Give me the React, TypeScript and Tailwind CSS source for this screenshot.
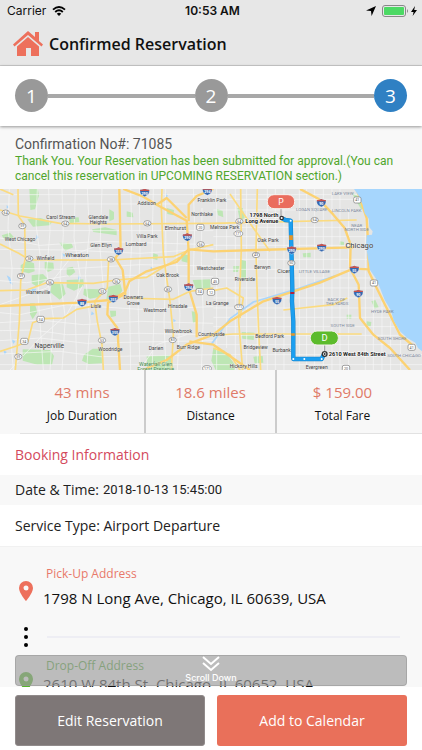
import type { ReactNode } from 'react';

type Label = [text: string, x: number, y: number, size?: number];

const towns: Label[] = [
  ['Addison', 440, 50], ['Carol Stream', 182, 94], ['Glendale', 295, 92], ['Heights', 295, 109],
  ['Elmhurst', 526, 126, 16], ['Villa Park', 441, 150], ['Lombard', 408, 173, 16], ['West Chicago', 60, 160],
  ['Glen Ellyn', 303, 178], ['Wheaton', 231, 206, 18], ['Winfield', 136, 215], ['Oak Brook', 503, 268],
  ['Warrenville', 114, 319], ['Downers', 400, 333, 15], ['Grove', 400, 350, 15], ['Lisle', 288, 360, 15],
  ['Westmont', 465, 373, 15], ['Hinsdale', 533, 360], ['Willowbrook', 535, 435], ['Countryside', 634, 443],
  ['Woodridge', 331, 488], ['Darien', 468, 486], ['Burr Ridge', 565, 484], ['Naperville', 148, 481, 20],
  ['Franklin Park', 636, 42], ['Northlake', 606, 84], ['Melrose Park', 674, 124], ['Westchester', 632, 245],
  ['La Grange', 652, 352], ['Oak Park', 804, 161, 16], ['Berwyn', 787, 242, 15], ['Cicero', 856, 256, 17],
  ['Riverside', 735, 280], ['Bedford Park', 809, 449], ['Bridgeview', 767, 482], ['Burbank', 845, 491],
  ['Hickory Hills', 731, 540], ['Evergreen', 950, 542], ['Chicago', 1078, 180, 23],
];

const districts: Label[] = [
  ['LAKE VIEW', 1028, 20], ['LOGAN SQUARE', 935, 70], ['LINCOLN PARK', 1040, 73], ['NEAR', 1070, 118],
  ['NORTH SIDE', 1070, 130], ['LITTLE VILLAGE', 943, 254], ['BACK OF', 1009, 340], ['THE YARDS', 1011, 352],
  ['SOUTH SIDE', 1028, 417], ['HYDE PARK', 1147, 376], ['SOUTH SHORE', 1176, 457], ['SOUTH CHICAGO', 1212, 506],
];

const routeSigns: Label[] = [
  ['64', 17, 74], ['59', 67, 114], ['64', 196, 107], ['64', 442, 106], ['38', 88, 212], ['38', 333, 214],
  ['59', 63, 264], ['56', 150, 283], ['56', 349, 280], ['53', 307, 310], ['83', 504, 304], ['56', 602, 169],
  ['53', 306, 457], ['83', 518, 456], ['59', 55, 506], ['171', 715, 137], ['64', 718, 100], ['43', 768, 201],
  ['171', 717, 357], ['64', 944, 96], ['171', 621, 541],
];

const usSigns: Label[] = [
  ['34', 122, 394], ['34', 73, 460], ['20', 601, 118], ['34', 599, 311], ['45', 645, 280],
  ['41', 1072, 36], ['41', 1122, 285], ['41', 1235, 478], ['12', 633, 313], ['20', 1038, 541],
];

const interstates: Label[] = [
  ['290', 434, 14], ['290', 562, 148], ['355', 356, 190], ['355', 340, 332], ['88', 246, 344], ['355', 345, 432],
  ['294', 566, 298], ['294', 622, 10], ['290', 875, 187], ['290', 965, 179], ['90', 964, 45],
  ['55', 831, 338], ['55', 1063, 245], ['90', 1075, 317],
];

const parks = [
  'M88 0l25 0 4 22-12 42-14 2z', 'M82 94l40-4 35 12-8 10-50 4z', 'M5 142l25-8 12 14-28 8z',
  'M62 232l20-14 20 8 2 24-18 6-24-6z', 'M134 222l26 2 2 20-18 8-10-10z', 'M95 262l34-4 14 14-32 24-16-10z',
  'M155 285l34 4 8 28-18 18-28-22z', 'M200 276l50-2 2 20-30 14-22-10z', 'M252 302l46 2 4 22-32 6-20-12z',
  'M325 296l36-8 6 20-18 24-30 2z', 'M90 346l14 0 8 26-14 22-8-16z', 'M68 484l82 2 12 18-6 26-44 0-44-12z',
  'M252 500l26-18 26 0 2 44-40 2-20-10z', 'M276 124l40-6 34 8 0 16-26-4-44-6z', 'M328 64l14 8 0 22-14 6z',
  'M206 90l30-2 2 14-28 4z', 'M200 240l18-4 8 16-18 14-8-8z', 'M178 164l36 2 6 12-24 10z',
  'M578 276l52-2 2 28-44 2z', 'M575 370l14 2 4 26-14 8z', 'M440 505l70-4 12 45-80 0z',
  'M543 196l22 6-2 22-18-4z', 'M460 196l14 4-2 16-14-4z', 'M330 368l18 0 0 16-16 4z',
  'M640 480l34 8 34 46-6 14-54 0-14-30z', 'M712 60l16 0 6 30-14 8z', 'M722 215l16 4 0 58-14-4z',
  'M700 234l18 0-4 18-14 0z', 'M1055 14l18 10 18 38-8 2z', 'M1020 160l12 2 0 10-14 0z',
  'M908 196l24-2 0 14-22 0z', 'M1114 340l12-4 10 22-12 4z', 'M1100 400l14 2-2 14-12-4z',
  'M650 62l18 6 2 20-16-6z', 'M725 432l38 2-2 22-34-4z', 'M760 506l28-2 2 20-26 2z',
  'M1040 380l14 0 0 12-14 0z', 'M380 70l18 4 2 14-20-2z', 'M500 60l22 6-2 16-18-4z',
];

const ponds = [
  'M20 262l10 6 8 22-8-4z', 'M110 140l6 8-8 6z', 'M186 196l12 4-6 8z', 'M95 302l14 0-4 8-10 0z',
  'M20 50l6 8-6 4z', 'M236 260l6 10-8 6z', 'M34 452l12 8-6 8z', 'M10 486l10 6-6 8z', 'M498 16l6 8-6 4z',
  'M520 392l8 6-8 6z', 'M452 236l10 6-10 6z', 'M275 370l8 8-10 4z',
];

const streets = [
  'M0 20H1080M0 48H560M0 128H640M0 150L120 172 300 160 630 170M0 184L200 186 420 196 640 182M0 240L180 244 420 230 640 234',
  'M0 278L80 284 200 264 420 262 640 266M0 374L60 380 200 350 420 364 640 356M0 404L120 396 250 410 420 400 640 406',
  'M0 428L100 426 200 440 420 436 640 440M0 458L120 450 260 466 420 462 640 458M0 498L180 490 300 506 640 500M0 530H640',
  'M28 3L24 120 36 240 30 420 40 546M112 3L108 110 120 200 114 320 130 546M146 3L150 130 140 250 160 390 150 546',
  'M186 3L190 140 180 270 196 390 186 546M226 3L222 150 240 260 226 370 230 546M262 3L268 130 256 260 270 400 260 546',
  'M306 3L300 180 310 300M392 3L396 150 388 300 392 546M418 3L420 200 414 340 420 546M460 3L456 200 464 340 456 546M496 3L498 220 492 400 498 546',
  'M534 100L530 220 540 380 532 546M580 3L584 120 580 260M606 60L604 220 610 390 604 546',
  'M30 546L120 450 200 380 250 290M0 350L140 300 220 200 300 170M420 546L470 470 560 440',
  'M650 3V546M680 3V480M706 3V546M740 3V546M772 3V546M802 3V546M826 3V546M852 3V546M898 3V546M920 3V546M944 3V546M970 3V546M996 3V546M1020 3V546M1046 60V546M1096 120V546M1120 290V546M1146 340V546M1172 400V546M1202 450V546',
  'M640 34H1070M640 66H1085M640 118H1100M640 146H1100M640 172H1100M640 214H1102M640 244H1105M640 270H1110M640 300H1125M640 330H1145M640 360H1160M640 388H1170M640 416H1185M640 442H1195M640 470H1228M640 500H1266M640 530H1266',
];

const highways = [
  'M0 66L60 84 180 106 320 108 640 106 1070 96', 'M54 3L55 84 74 110 76 210 62 280 58 400 46 546', 'M0 168L56 196 90 216 330 216 520 206 568 186 640 170',
  'M0 308L80 306 140 284 280 286 350 276 440 268 540 208', 'M0 490L50 474 84 460 98 404 130 392 190 390 230 364 300 350',
  'M326 216L322 300 284 340 292 400 306 470 310 546', 'M368 330L520 334 570 310 640 300',
  'M486 3L484 60 490 200 510 340 520 440 514 546', 'M0 3L40 20', 'M772 3L768 190 772 330 776 430 782 546',
  'M722 3L724 180 716 400 728 546', 'M640 442L700 438 1085 438', 'M690 18L760 120 810 190', 'M640 480L690 500 720 546',
  'M640 308L680 300 730 330 720 390', 'M1042 330L1000 350 850 366',
];

const expressways = [
  'M0 354L240 344 330 336 374 314 388 280 440 250 530 222 566 184 640 190 770 186 1060 178',
  'M358 3L362 190 346 210 368 246 376 318 324 344 322 380 352 420 360 546',
  'M370 3L430 26 470 50 560 98 566 190 566 300 590 380 590 448', 'M640 3L590 24 566 50 566 100',
  'M430 546L500 516 560 470 640 440 690 400 790 340 960 284 1060 242 1108 244',
  'M900 3L955 32 1000 80 1034 120 1052 170 1050 240 1076 290 1080 390 1120 440 1170 480 1230 546',
  'M1070 3L1100 90 1104 160 1106 250 1130 300 1170 380 1200 440 1240 474', 'M568 460L640 470 750 546', 'M470 50L500 30 560 90',
];

const route = 'M847 91L856 96 872 98 877 300 876 340 880 400 880 513 965 513 971 500';

function Interstate({ label }: { label: Label }) {
  const [text, x, y] = label;
  return (
    <g transform={`translate(${x} ${y})`}>
      <path d="M-13-9Q-6-8 0-12Q6-8 13-9Q18 5 0 12Q-18 5-13-9Z" fill="#3468b0" stroke="#fff" strokeWidth="1" />
      <path d="M-13-9Q-6-8 0-12Q6-8 13-9L14-5H-14Z" fill="#c9534d" />
      <text y="6" fontSize="11" fontWeight="700" fill="#fff">{text}</text>
    </g>
  );
}

function RouteMap() {
  return (
    <svg
      viewBox="0 3 1266 543"
      className="block w-full font-[Roboto,sans-serif]"
      role="img"
      aria-label="Route from 1798 North Long Avenue to 2610 West 84th Street"
      textAnchor="middle"
    >
      <rect y="0" width="1266" height="550" fill="#e5e5e4" />
      {parks.map((d) => <path key={d} d={d} fill="#bde6b4" />)}
      {ponds.map((d) => <path key={d} d={d} fill="#a9d5fb" />)}
      <g fill="none" strokeLinejoin="round">
        {streets.map((d) => <path key={d} d={d} stroke="#f8f8f8" strokeWidth="2" />)}
        <path d="M633 470L690 392 760 342 900 300 1010 262" stroke="#a9d5fb" strokeWidth="5" />
        {highways.map((d) => <path key={d} d={d} stroke="#fbdb80" strokeWidth="5" />)}
        {expressways.map((d) => <path key={d} d={d} stroke="#fcd272" strokeWidth="7" />)}
      </g>
      <path
        d="M1060 0L1074 20 1088 50 1094 76 1106 92 1108 118 1118 130 1116 140 1100 142 1098 172 1104 212 1110 246 1128 272 1140 300 1154 336 1172 366 1182 400 1200 430 1222 450 1246 464 1254 480 1266 490V0Z"
        fill="#a6d6fd"
      />
      {routeSigns.map(([text, x, y]) => (
        <g key={`${text}-${x}`}>
          <ellipse cx={x} cy={y} rx={text.length > 2 ? 13 : 11} ry="8" fill="#fff" stroke="#777" strokeWidth="2" />
          <text x={x} y={y + 4} fontSize="11" fill="#555">{text}</text>
        </g>
      ))}
      {usSigns.map(([text, x, y]) => (
        <g key={`${text}-${x}`}>
          <rect x={x - 11} y={y - 9} width="22" height="18" rx="5" fill="#fff" stroke="#777" strokeWidth="2" />
          <text x={x} y={y + 4} fontSize="11" fill="#555">{text}</text>
        </g>
      ))}
      <g fill="#7c889c" fontSize="13">
        {districts.map(([text, x, y]) => <text key={text} x={x} y={y}>{text}</text>)}
      </g>
      <g fill="#404040" stroke="#f0f0f0" strokeWidth="1" paintOrder="stroke">
        {towns.map(([text, x, y, size = 15]) => <text key={text} x={x} y={y} fontSize={size}>{text}</text>)}
        <text x="467" y="533" fontSize="16" fill="#3f8a48">Waterfall Glen</text>
        <text x="467" y="550" fontSize="16" fill="#3f8a48">Forest Preserve</text>
      </g>
      <path d={route} fill="none" stroke="#1682c8" strokeWidth="13" strokeLinejoin="round" />
      <path d={route} fill="none" stroke="#1c9ff0" strokeWidth="10" strokeLinejoin="round" />
      <path d="M873 142V156M879 436V443" stroke="#e89525" strokeWidth="11" />
      <path d="M877 312V318" stroke="#b3203a" strokeWidth="12" />
      {interstates.map((label) => <Interstate key={`${label[1]}`} label={label} />)}
      <ellipse cx="874" cy="225" rx="11" ry="8" fill="#fff" stroke="#777" strokeWidth="2" />
      <text x="874" y="229" fontSize="11" fill="#555">50</text>
      <g fill="#fff">
        <circle cx="872" cy="98" r="3" /><circle cx="880" cy="513" r="3" /><circle cx="913" cy="513" r="3" /><circle cx="965" cy="513" r="3" />
      </g>
      <g fill="#fff" stroke="#333" strokeWidth="4">
        <circle cx="845" cy="90" r="5" /><circle cx="974" cy="498" r="7" />
      </g>
      <circle cx="974" cy="498" r="3" fill="#333" />
      <path d="M843 60V84M974 470V490" stroke="#777" strokeWidth="2" />
      <rect x="802" y="20" width="82" height="42" rx="20" fill="#ea6c5d" stroke="#f6f2ee" strokeWidth="3" />
      <rect x="931" y="429" width="84" height="42" rx="20" fill="#5cbb2b" stroke="#f6f2ee" strokeWidth="3" />
      <text x="843" y="50" fontSize="26" fill="#fff">P</text>
      <text x="974" y="460" fontSize="28" fill="#fff">D</text>
      <g fill="#1a1a1a" fontWeight="700" fontSize="17" stroke="#fff" strokeWidth="3" paintOrder="stroke">
        <text x="835" y="87" textAnchor="end">1798 North</text>
        <text x="835" y="106" textAnchor="end">Long Avenue</text>
        <text x="986" y="504" textAnchor="start">2610 West 84th Street</text>
      </g>
    </svg>
  );
}

function StatusBar() {
  return (
    <div className="grid h-[22px] grid-cols-3 items-center pl-[7px] pr-1 font-[Inter,sans-serif] text-xs leading-4 text-[#111]">
      <div className="flex items-center gap-[6px]">
        <span>Carrier</span>
        <svg viewBox="0 0 14 10" className="h-[10px] w-[14px]" aria-hidden="true">
          <path d="M1 3.6Q7-1.6 13 3.6M3.2 6Q7 2.6 10.8 6" fill="none" stroke="#000" strokeWidth="1.9" />
          <path d="M7 10L4.8 7.7Q7 6 9.2 7.7Z" />
        </svg>
      </div>
      <span className="text-center font-semibold">10:53 AM</span>
      <div className="flex items-center justify-end gap-[6px]">
        <svg viewBox="0 0 10 10" className="h-[10px] w-[10px]" aria-hidden="true"><path d="M10 0L5.6 10 5 5 0 4.6Z" /></svg>
        <svg viewBox="0 0 36 12" className="h-3 w-9" aria-hidden="true">
          <rect x=".5" y=".5" width="23" height="11" rx="2.5" fill="none" stroke="#888" />
          <rect x="2" y="2" width="20" height="8" rx="1" fill="#4cd964" />
          <path d="M25 4Q27 6 25 8Z" fill="#888" />
          <path d="M33 1L29 7H31.6L30.6 11 35 5H32.2Z" />
        </svg>
      </div>
    </div>
  );
}

function Step({ children, active = false }: { children: ReactNode; active?: boolean }) {
  return (
    <li
      aria-current={active ? 'step' : undefined}
      className={`flex size-[33px] items-center justify-center rounded-full text-[19px] leading-6 text-white ${active ? 'bg-[#2f80c3]' : 'bg-[#999]'}`}
    >
      {children}
    </li>
  );
}

function Stat({ value, label }: { value: string; label: string }) {
  return (
    <div className="flex flex-col-reverse items-center justify-center gap-[2px] pt-[5px]">
      <dt className="text-xs leading-[22px] text-[#111]">{label}</dt>
      <dd className="text-[15px] leading-[22px] text-[#df7a68]">{value}</dd>
    </div>
  );
}

function Pin({ className }: { className: string }) {
  return (
    <svg viewBox="0 0 14 20" className={`h-5 w-[14px] ${className}`} aria-hidden="true">
      <path fillRule="evenodd" fill="currentColor" d="M7 0a7 7 0 0 0-7 7c0 5 7 13 7 13s7-8 7-13a7 7 0 0 0-7-7Zm0 4.5a2.5 2.5 0 1 1 0 5 2.5 2.5 0 0 1 0-5Z" />
    </svg>
  );
}

export default function App() {
  return (
    <div className="flex flex-col bg-white font-['Open_Sans',sans-serif] text-[#222]">
      <header className="border-b border-[#ccc] bg-[#e7e7e7]">
        <StatusBar />
        <div className="flex h-[43px] items-center gap-[6px] pl-[13px]">
          <a href="#home" aria-label="Home">
            <svg viewBox="0 0 30 25" className="h-[25px] w-[30px]" fill="#ed705c" aria-hidden="true">
              <path d="M15 0L22 6V1H26V10L30 13.5 28.5 15.5 15 4 1.5 15.5 0 13.5Z" />
              <path d="M15 6L26 15.5V25H18V17H13V25H4V15.5Z" />
            </svg>
          </a>
          <h1 className="text-base font-semibold leading-6 text-[#111]">Confirmed Reservation</h1>
        </div>
      </header>

      <nav aria-label="Progress" className="relative z-10 bg-white px-[15px] pb-[14px] pt-[13px] shadow-[0_1px_3px_rgba(0,0,0,0.4)]">
        <ol className="flex items-center">
          <Step>1</Step>
          <li aria-hidden="true" className="h-1 flex-1 bg-[#a8a8a8]" />
          <Step>2</Step>
          <li aria-hidden="true" className="h-1 flex-1 bg-[#a8a8a8]" />
          <Step active>3</Step>
        </ol>
      </nav>

      <main>
        <section className="bg-[#f8f8f8] px-[15px] pb-[5px] pt-2 font-[Roboto,sans-serif]">
          <p className="text-sm leading-5 text-[#555]">Confirmation No#: 71085</p>
          <p className="text-xs leading-[15px] text-[#4fa62c]">
            Thank You. Your Reservation has been submitted for approval.(You can cancel this reservation in UPCOMING RESERVATION section.)
          </p>
        </section>

        <RouteMap />

        <div className="bg-[#f8f8f8] pl-5">
          <dl className="grid h-16 grid-cols-[126px_1fr_1fr] divide-x-2 divide-[#ccc] border-b border-[#e2e2e2] pr-[14px]">
            <Stat value="43 mins" label="Job Duration" />
            <Stat value="18.6 miles" label="Distance" />
            <Stat value="$ 159.00" label="Total Fare" />
          </dl>
        </div>

        <h2 className="px-[15px] py-[10px] text-sm leading-[21px] text-[#d44a5d]">Booking Information</h2>
        <p className="flex gap-1 bg-[#f8f8f8] px-[15px] py-1 text-sm leading-[22px]">
          <span>Date &amp; Time:</span>
          <time dateTime="2018-10-13T15:45:00" className="font-[Roboto,sans-serif] text-[13px]">2018-10-13 15:45:00</time>
        </p>
        <p className="px-[15px] py-[10px] text-sm leading-[21px]">Service Type: Airport Departure</p>

        <section className="relative h-[141px] overflow-hidden border-t border-[#f1f1f1] bg-[#f8f8f8]">
          <div className="grid grid-cols-[43px_1fr] pt-[17px]">
            <div className="flex justify-center pl-2 pt-[17px]"><Pin className="text-[#ed705c]" /></div>
            <div>
              <h3 className="pl-[3px] text-xs leading-5 text-[#e8796a]">Pick-Up Address</h3>
              <p className="pt-[2px] text-[15px] leading-6 text-[#111]">1798 N Long Ave, Chicago, IL 60639, USA</p>
            </div>
          </div>
          <div className="grid h-[46px] grid-cols-[43px_1fr] items-center pt-2">
            <div className="flex flex-col items-center gap-1 pl-2">
              <i className="size-1 rounded-full bg-black" /><i className="size-1 rounded-full bg-black" /><i className="size-1 rounded-full bg-black" />
            </div>
            <hr className="ml-1 mr-[22px] border-t-2 border-[#eeeef4]" />
          </div>
          <div className="grid grid-cols-[43px_1fr]">
            <div className="flex justify-center pl-2 pt-4"><Pin className="text-[#55b52b]" /></div>
            <div>
              <h3 className="pl-[3px] text-xs leading-5 text-[#55a83a]">Drop-Off Address</h3>
              <p className="text-[15px] leading-4 text-[#111]">2610 W 84th St, Chicago, IL 60652, USA</p>
            </div>
          </div>
          <button
            type="button"
            className="absolute inset-x-[15px] bottom-px flex h-[31px] flex-col items-center rounded border border-[#999]/60 bg-[#9e9e9e]/67 font-[Inter,sans-serif] text-[9px] font-medium leading-3 text-white"
          >
            <svg viewBox="0 0 18 16" className="h-4 w-[18px] shrink-0" fill="none" stroke="currentColor" strokeWidth="2" aria-hidden="true">
              <path d="M1 1L9 8 17 1M1 7L9 14 17 7" />
            </svg>
            Scroll Down
          </button>
        </section>
      </main>

      <footer className="grid grid-cols-2 gap-3 bg-white px-[15px] pb-1 pt-2 text-sm text-white">
        <button type="button" className="h-[51px] rounded-[3px] border border-[#918b8b] bg-[#7e7777]">Edit Reservation</button>
        <button type="button" className="h-[51px] rounded-[3px] bg-[#e9705a]">Add to Calendar</button>
      </footer>
    </div>
  );
}
